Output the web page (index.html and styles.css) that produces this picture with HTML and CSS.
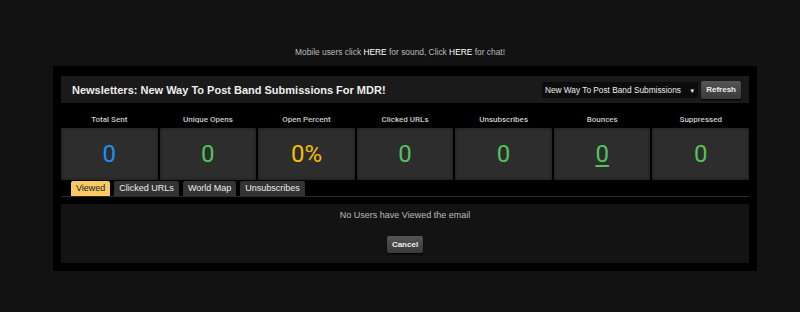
FILE: index.html
```html
<!DOCTYPE html>
<html lang="en">
<head>
    <meta charset="UTF-8">
    <title>Newsletter Stats</title>
    <link rel="stylesheet" href="styles.css">
</head>
<body>
    <div class="notice">Mobile users click <b>HERE</b> for sound, Click <b>HERE</b> for chat!</div>

    <div class="outer">
        <!-- Header -->
        <div class="head">
            <h1>Newsletters: New Way To Post Band Submissions For MDR!</h1>
            <div class="headTools">
                <div class="picker">New Way To Post Band Submissions <span class="arrow">&#9660;</span></div>
                <button class="btn">Refresh</button>
            </div>
        </div>

        <!-- Stats -->
        <div class="stats">
            <div class="stat"><div class="label">Total Sent</div><div class="box blue">0</div></div>
            <div class="stat"><div class="label">Unique Opens</div><div class="box green">0</div></div>
            <div class="stat"><div class="label">Open Percent</div><div class="box yellow">0%</div></div>
            <div class="stat"><div class="label">Clicked URLs</div><div class="box green">0</div></div>
            <div class="stat"><div class="label">Unsubscribes</div><div class="box green">0</div></div>
            <div class="stat"><div class="label">Bounces</div><div class="box green"><u>0</u></div></div>
            <div class="stat"><div class="label">Suppressed</div><div class="box green">0</div></div>
        </div>

        <!-- Tabs -->
        <div class="tabs">
            <span class="tab active">Viewed</span>
            <span class="tab">Clicked URLs</span>
            <span class="tab">World Map</span>
            <span class="tab">Unsubscribes</span>
        </div>

        <div class="result">
            <div class="msg">No Users have Viewed the email</div>
            <button class="btn">Cancel</button>
        </div>
    </div>
</body>
</html>
```

FILE: styles.css
```css
body {
    margin: 0;
    background: #121212;
    font-family: "Liberation Sans", Arial, sans-serif;
    color: #ddd;
}

.notice {
    text-align: center;
    font-size: 8.4px;
    color: #bbb;
    padding-top: 47px;
    height: 19px;
}

.notice b {
    color: #fff;
    font-weight: normal;
}

.outer {
    width: 688px;
    margin: 0 0 0 53px;
    background: #000;
    padding: 10px 8px 8px 8px;
}

.head {
    background: #1a1a1a;
    height: 27px;
    display: flex;
    align-items: center;
    justify-content: space-between;
    padding: 0 8px 0 11px;
}

.head h1 {
    margin: 0;
    font-size: 11px;
    font-weight: bold;
    color: #eee;
}

.headTools {
    display: flex;
    align-items: center;
    gap: 3px;
}

.picker {
    background: #0c0c0c;
    color: #eee;
    font-size: 8.3px;
    height: 16px;
    line-height: 16px;
    padding: 0 3px 0 3px;
    border-radius: 2px;
}

.picker .arrow {
    font-size: 6px;
    margin-left: 6px;
}

.btn {
    font-family: "Liberation Sans", Arial, sans-serif;
    font-size: 8px;
    font-weight: bold;
    color: #eee;
    background: linear-gradient(#555, #3a3a3a);
    border: none;
    border-radius: 2px;
    height: 18px;
    padding: 0 5px;
    box-shadow: 0 1px 2px #000;
}

.stats {
    display: flex;
    gap: 2px;
    margin-top: 9px;
}

.stat {
    flex: 1;
}

.stat .label {
    text-align: center;
    font-family: Roboto, sans-serif;
    font-size: 8px;
    font-weight: 500;
    color: #ccc;
    height: 16px;
    line-height: 16px;
}

.box {
    background: #2d2d2d;
    height: 52px;
    line-height: 52px;
    text-align: center;
    font-family: Roboto, sans-serif;
    font-size: 24px;
    box-shadow: inset 0 0 3px #181818;
}

.blue { color: #1e90f0; }
.green { color: #55c25a; }
.yellow { color: #f5c000; }

.box u {
    text-underline-offset: 3px;
}

.tabs {
    display: flex;
    gap: 4px;
    padding: 1px 0 0 10px;
    border-bottom: 1px solid #2a2a2a;
    height: 15px;
}

.tab {
    background: #333;
    color: #eee;
    font-size: 9px;
    height: 15px;
    line-height: 15px;
    padding: 0 5px;
    border-radius: 2px 2px 0 0;
}

.tab.active {
    background: #f8c965;
    color: #222;
}

.result {
    background: #131313;
    margin-top: 7px;
    height: 59px;
    text-align: center;
    overflow: hidden;
}

.result .msg {
    font-size: 9px;
    color: #bbb;
    padding-top: 6px;
    height: 26px;
}

.result .btn {
    display: block;
    margin: 0 auto;
    height: 17px;
}
```
